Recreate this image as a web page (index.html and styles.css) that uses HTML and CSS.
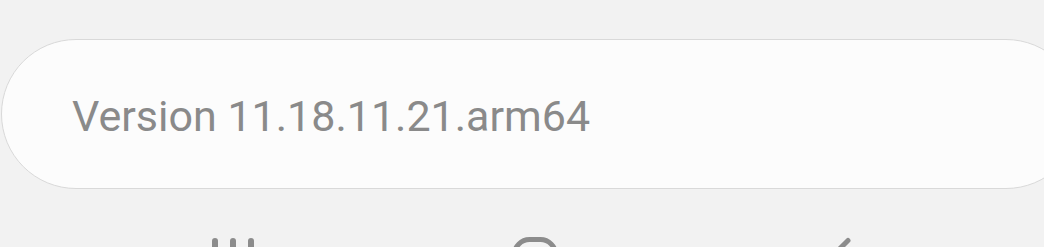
FILE: index.html
```html
<!DOCTYPE html>
<html>
<head>
<meta charset="utf-8">
<link rel="stylesheet" href="styles.css">
</head>
<body>
<div class="screen">
  <div class="card">
    <span class="version">Version 11.18.11.21.arm64</span>
  </div>
  <div class="nav">
    <svg class="ico recents" width="42" height="50" viewBox="0 0 42 50">
      <rect x="0" y="2" width="6" height="44" rx="3" fill="#8c8c8c"/>
      <rect x="18" y="2" width="6" height="44" rx="3" fill="#8c8c8c"/>
      <rect x="36" y="2" width="6" height="44" rx="3" fill="#8c8c8c"/>
    </svg>
    <svg class="ico home" width="46" height="50" viewBox="0 0 46 50">
      <rect x="2.5" y="3.5" width="41" height="41" rx="15" fill="none" stroke="#8c8c8c" stroke-width="5"/>
    </svg>
    <svg class="ico back" width="32" height="50" viewBox="0 0 32 50">
      <polyline points="26,4.5 6,24.5 26,44.5" fill="none" stroke="#8c8c8c" stroke-width="5" stroke-linecap="round" stroke-linejoin="round"/>
    </svg>
  </div>
</div>
</body>
</html>
```
FILE: styles.css
```css
html, body {
  margin: 0;
  padding: 0;
  background: #f2f2f2;
  overflow: hidden;
  width: 1044px;
  height: 247px;
}
.screen {
  width: 1044px;
  height: 247px;
  overflow: hidden;
}
.card {
  box-sizing: border-box;
  margin: 39px 0 0 1px;
  width: 1080px;
  height: 150px;
  border: 1px solid #d9d9d9;
  border-radius: 75px;
  background: #fcfcfc;
  display: flex;
  align-items: center;
  padding-left: 70px;
}
.version {
  font-family: Roboto, "Liberation Sans", sans-serif;
  font-size: 43px;
  color: #8a8a8a;
  line-height: 1;
  position: relative;
  top: 2px;
}
.nav {
  display: flex;
  align-items: flex-start;
  margin-top: 47px;
  padding-left: 212px;
}
.ico { flex: none; display: block; }
.home { margin-left: 258px; }
.back { margin-left: 264px; }
```
